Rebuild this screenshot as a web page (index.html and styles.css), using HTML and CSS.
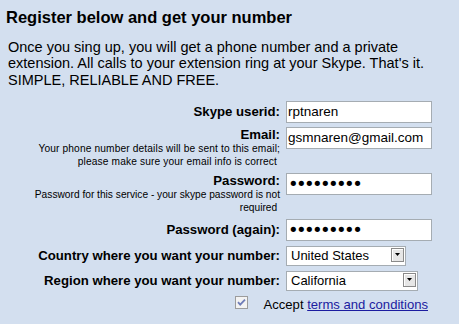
FILE: index.html
```html
<!DOCTYPE html>
<html lang="en">
<head>
<meta charset="utf-8">
<title>Register below and get your number</title>
<link rel="stylesheet" href="styles.css">
</head>
<body>
<div class="page">
  <h1 class="title">Register below and get your number</h1>
  <p class="intro">Once you sing up, you will get a phone number and a private extension. All calls to your extension ring at your Skype. That's it. SIMPLE, RELIABLE AND FREE.</p>
  <form class="form">
    <label class="field-label mid" for="userid"><span class="label-title">Skype userid:</span></label>
    <div class="field"><input id="userid" class="text-input" type="text" value="rptnaren"></div>

    <label class="field-label" for="email"><span class="label-title">Email:</span><span class="note wide">Your phone number details will be sent to this email;<br>please make sure your email info is correct&nbsp;</span></label>
    <div class="field"><input id="email" class="text-input" type="text" value="gsmnaren@gmail.com"></div>

    <label class="field-label" for="pass"><span class="label-title">Password:</span><span class="note">Password for this service - your skype password is not required&nbsp;</span></label>
    <div class="field"><input id="pass" class="text-input secret" type="password" value="abcdefghi"></div>

    <label class="field-label mid" for="pass2"><span class="label-title">Password (again):</span></label>
    <div class="field"><input id="pass2" class="text-input secret" type="password" value="abcdefghi"></div>

    <label class="field-label mid" for="country"><span class="label-title">Country where you want your number:</span></label>
    <div class="field">
      <div class="select country">
        <select id="country"><option>United States</option></select>
        <span class="arrow"><svg width="5" height="3" viewBox="0 0 5 3"><path d="M0 0H5L2.5 3Z" fill="#000"/></svg></span>
      </div>
    </div>

    <label class="field-label mid" for="region"><span class="label-title">Region where you want your number:</span></label>
    <div class="field">
      <div class="select region">
        <select id="region"><option>California</option></select>
        <span class="arrow"><svg width="5" height="3" viewBox="0 0 5 3"><path d="M0 0H5L2.5 3Z" fill="#000"/></svg></span>
      </div>
    </div>

    <div class="accept">
      <label class="accept-check">
        <input class="hidden-check" type="checkbox" checked>
        <svg class="check-box" width="13" height="13" viewBox="0 0 13 13"><rect x="0.5" y="0.5" width="12" height="12" fill="#f3f3f3" stroke="#9c9c9c"/><path d="M3 6.2L5.2 8.6L10 3.6" fill="none" stroke="#6f7db8" stroke-width="1.8"/></svg>
      </label>
      <span class="accept-text">Accept <a class="terms" href="#terms">terms and conditions</a></span>
    </div>
  </form>
</div>
</body>
</html>
```

FILE: styles.css
```css
html, body {
  margin: 0;
  padding: 0;
  background: #d3dfef;
}

body {
  font-family: "Liberation Sans", Arial, sans-serif;
  color: #000;
}

.page {
  padding-top: 8px;
}

.title {
  margin: 0 0 0 6px;
  font-size: 16.5px;
  line-height: 19px;
  font-weight: bold;
}

.intro {
  margin: 11.5px 8px 0 8px;
  font-size: 14.5px;
  line-height: 16.6px;
}

.form {
  display: grid;
  grid-template-columns: 248px auto;
  column-gap: 6px;
  row-gap: 4px;
  margin: 12.5px 0 0 32px;
  justify-content: start;
}

.field-label {
  display: block;
  text-align: right;
  align-self: start;
}

.field-label.mid {
  align-self: center;
}

.label-title {
  display: block;
  font-size: 13.2px;
  line-height: 15px;
  font-weight: bold;
}

.note {
  display: block;
  font-size: 10.2px;
  line-height: 13.5px;
}

.note.wide {
  letter-spacing: 0.13px;
}

.field {
  align-self: start;
}

.text-input {
  display: block;
  box-sizing: border-box;
  width: 146px;
  height: 22px;
  margin: 0;
  padding: 0 1px;
  border: 1px solid #a5acb2;
  background: #fff;
  font-family: "Liberation Sans", Arial, sans-serif;
  font-size: 13.5px;
  color: #000;
  outline: none;
}

.text-input.secret {
  font-family: "DejaVu Sans", sans-serif;
  font-size: 18px;
  letter-spacing: -2.6px;
  padding-left: 1px;
}

.select {
  position: relative;
  margin-top: 1px;
}

.select.country {
  width: 120px;
}

.select.region {
  width: 132px;
}

.select select {
  display: block;
  box-sizing: border-box;
  width: 100%;
  height: 20px;
  margin: 0;
  padding: 0 0 0 4px;
  border: 1px solid #a5acb2;
  border-radius: 0;
  background: #fff;
  font-family: "Liberation Sans", Arial, sans-serif;
  font-size: 13px;
  color: #000;
  appearance: none;
  -webkit-appearance: none;
  outline: none;
}

.arrow {
  position: absolute;
  top: 2px;
  right: 2px;
  width: 13px;
  height: 14px;
  box-sizing: border-box;
  border: 1px solid #8a8a8a;
  background: #e6e6e6;
  box-shadow: inset 1px 1px #fff;
  display: flex;
  align-items: center;
  justify-content: center;
  pointer-events: none;
}

.arrow svg {
  display: block;
}

.accept {
  grid-column: 1 / -1;
  justify-self: end;
  display: flex;
  align-items: flex-start;
  column-gap: 16px;
  padding-right: 4px;
}

.accept-check {
  display: block;
  margin-top: 1px;
  line-height: 0;
}

.hidden-check {
  position: absolute;
  opacity: 0;
  width: 0;
  height: 0;
  margin: 0;
}

.check-box {
  display: block;
}

.accept-text {
  padding-top: 2px;
  font-size: 13.1px;
  line-height: 15px;
}

.terms {
  color: #1c1ca0;
  text-decoration: underline;
}
```
